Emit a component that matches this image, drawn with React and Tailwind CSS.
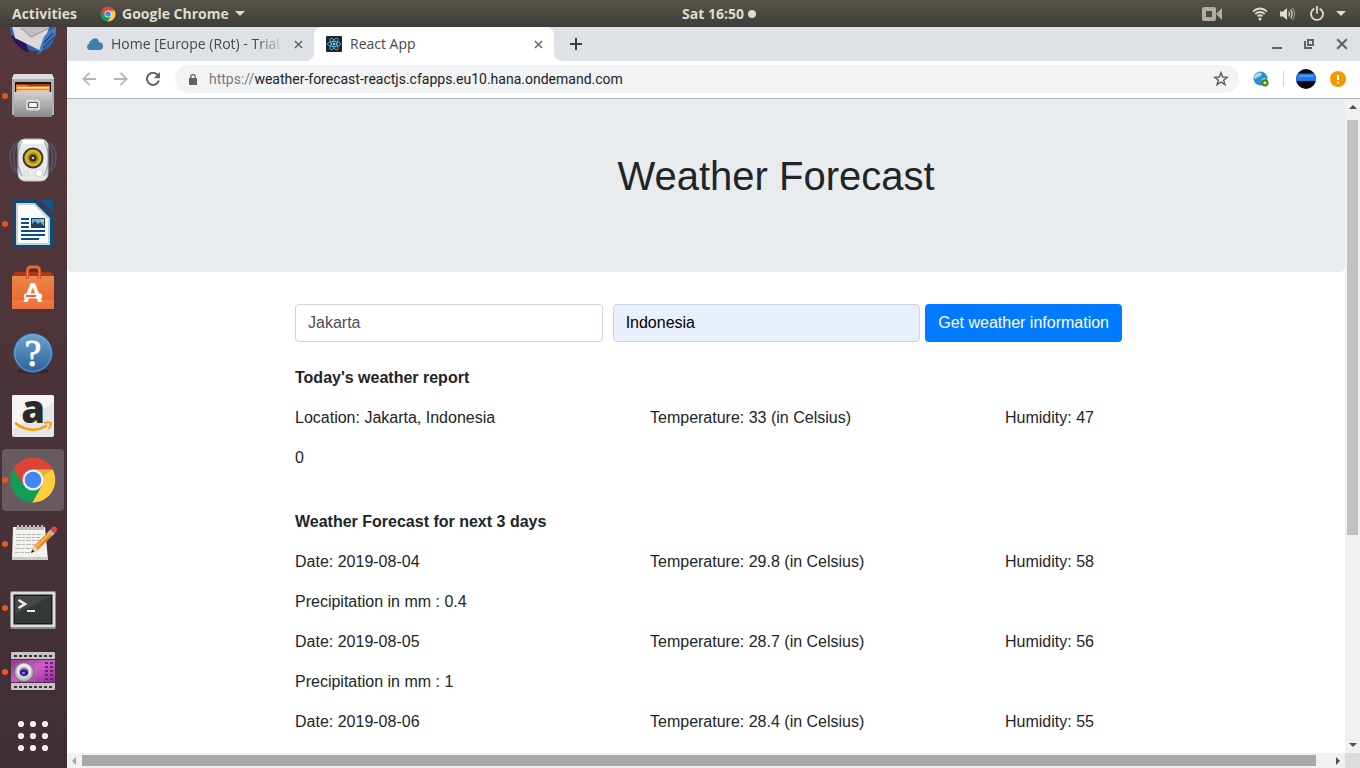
import React from "react";

const UI_FONT = "font-['Open_Sans','Noto_Sans',sans-serif]";

function ChromeLogo({ className }) {
  return (
    <svg viewBox="0 0 48 48" className={className} aria-hidden="true">
      <circle cx="24" cy="24" r="22.5" fill="#db4437" />
      <path d="M4.5 12.8 A22.5 22.5 0 0 0 23.4 46.5 L33.5 29.5 L14.5 29.5 Z" fill="#0f9d58" />
      <path d="M43.6 13.5 A22.5 22.5 0 0 1 23.4 46.5 L33.2 29.2 L24 13.5 Z" fill="#ffcd40" />
      <path d="M4.5 12.8 L14.8 29.2 L24 24 L24 13.5 Z" fill="#db4437" />
      <path d="M24 13.5 H43.6 L33 21 Z" fill="#000" opacity=".12" />
      <circle cx="24" cy="24" r="10.5" fill="#f1f1f1" />
      <circle cx="24" cy="24" r="8.3" fill="#4285f4" />
    </svg>
  );
}

function Thunderbird() {
  return (
    <svg viewBox="0 0 48 48" className="size-12" aria-hidden="true">
      <path d="M1 22 C1 6 12 1 24 1 C38 1 47 8 47 23 C46 34 41 40 36 43 L38 39 C34 44 30 47 27 47 L30 43 C18 44 4 36 1 22 Z" fill="#2f62a8" />
      <path d="M2 27 C5 35 11 41 20 45 L17 35 Z" fill="#2a1456" />
      <path d="M2 14 L42 14 L32 43 L6 30 Z" fill="#dcd8da" />
      <path d="M7 14 L22 29 L42 17 L42 12 Z" fill="#c3bcc0" />
      <path d="M12 20 L22 29 L40 20" fill="none" stroke="#8e858a" strokeWidth="1" />
      <path d="M47 18 C43 22 37 24 34 31 L30 43 C37 40 45 34 47 24 Z" fill="#3f7fc0" />
      <path d="M44 25 L35 35 M45 29 L34 40" stroke="#1c4382" strokeWidth="1.5" />
    </svg>
  );
}

function Files() {
  return (
    <svg viewBox="0 0 48 48" className="size-12" aria-hidden="true">
      <defs>
        <linearGradient id="cab" x1="0" y1="0" x2="0" y2="1">
          <stop offset="0" stopColor="#d0d0d0" />
          <stop offset="1" stopColor="#8a8a8a" />
        </linearGradient>
      </defs>
      <path d="M5 2 H43 L45 6 V43 H3 V6 Z" fill="#b0b0b0" />
      <path d="M5 2 H43 L45 7 H3 Z" fill="#dedede" />
      <rect x="6" y="10" width="36" height="12" fill="#1f1512" />
      <rect x="7" y="12" width="34" height="2" fill="#a83a10" />
      <path d="M7 13 H18 L20 14 H41 V21 H7 Z" fill="#ee7d2a" />
      <rect x="8" y="15" width="32" height="1.5" fill="#fff0dc" />
      <rect x="8" y="18" width="32" height="2" fill="#f6c17c" />
      <rect x="5" y="20" width="38" height="25" rx="1" fill="url(#cab)" />
      <rect x="17" y="27.5" width="14" height="11" rx="2.5" fill="#d9d9d9" />
      <rect x="19.5" y="30.500" width="9" height="5" rx="1" fill="#f3f3f3" stroke="#555" strokeWidth="1.200" />
    </svg>
  );
}

function Speaker() {
  return (
    <svg viewBox="0 0 48 48" className="size-12" aria-hidden="true">
      <rect x="9" y="3" width="30" height="42" rx="7" fill="#e9e9e7" stroke="#bcbcb8" strokeWidth="1" />
      <rect x="12" y="4" width="24" height="4" rx="2" fill="#fff" />
      <g fill="none" stroke="#5a78a8" strokeWidth="1.500" opacity=".5">
        <path d="M6 7 Q-4 22 6 36 M9 6 Q0 22 9 38 M13 5 Q4 22 13 40" />
        <path d="M42 7 Q52 22 42 36 M39 6 Q48 22 39 38 M35 5 Q44 22 35 40" />
      </g>
      <circle cx="24" cy="22" r="10.5" fill="#39393a" />
      <circle cx="24" cy="22" r="8.5" fill="#d9b916" />
      <circle cx="24" cy="22" r="5.5" fill="#a58a10" />
      <circle cx="24" cy="22" r="3.5" fill="#2c2c2c" />
      <circle cx="24" cy="22" r="1.3" fill="#ccc" />
      <circle cx="30" cy="37" r="3.8" fill="#fff" stroke="#cfcfcc" />
      <rect x="15" y="35" width="4" height="5" rx="1" fill="none" stroke="#d8d8d5" />
    </svg>
  );
}

function Writer() {
  return (
    <svg viewBox="0 0 48 48" className="size-12" aria-hidden="true">
      <path d="M6 0 H27 L44 16 V45 Q44 48 41 48 H7 Q4 48 4 45 V3 Q4 0 6 0 Z" fill="#0a4d7c" />
      <path d="M31 0 H42 Q44 0 44 2 V12 Z" fill="#0a5a90" />
      <path d="M7 3 H26 L41 18 V45 H7 Z" fill="#cfcfcf" />
      <path d="M9 5 H25 L39 19 V43 H9 Z" fill="#fafafa" />
      <g fill="#0b4f80">
        <rect x="12" y="18" width="8" height="2" />
        <rect x="12" y="22" width="8" height="2" />
        <rect x="12" y="26" width="8" height="2" />
        <rect x="12" y="30" width="24" height="2" />
        <rect x="12" y="34" width="24" height="2" />
        <rect x="12" y="38" width="18" height="2" />
      </g>
      <rect x="22.5" y="18.5" width="13" height="9" fill="#6fb4e0" stroke="#14405f" strokeWidth="1" />
      <path d="M23 27 V24 L26 21 L29 24 L31 22 L35 26 V27 Z" fill="#26404f" />
      <circle cx="33.5" cy="20.5" r="1.4" fill="#f2d04b" />
    </svg>
  );
}

function Software() {
  return (
    <svg viewBox="0 0 48 48" className="size-12 overflow-visible" aria-hidden="true">
      <defs>
        <linearGradient id="bag" x1="0" y1="0" x2="0" y2="1">
          <stop offset="0" stopColor="#e8884a" />
          <stop offset="1" stopColor="#ee5f24" />
        </linearGradient>
      </defs>
      <path d="M6 8 H42 L45 12 H3 Z" fill="#a8391a" />
      <rect x="3" y="12" width="42" height="33" fill="url(#bag)" />
      <rect x="3" y="36" width="42" height="9" fill="#fff" opacity=".1" />
      <path d="M18.500 15 V7 Q18.500 3 22 3 H27 Q30.500 3 30.500 7 V15" fill="none" stroke="#c94a1c" strokeWidth="3.400" />
      <path d="M18.500 15 V7 Q18.500 3 22 3 H27 Q30.500 3 30.500 7 V15" fill="none" stroke="#ef7a48" strokeWidth="1.500" />
      <text x="24" y="38" textAnchor="middle" fontSize="26" fontWeight="900" fontFamily="Lato, sans-serif" fill="#fff">A</text>
      <rect x="15" y="29.500" width="18" height="5" rx="1.500" fill="#fff" />
      <rect x="17" y="31" width="10" height="2" fill="#ee6a2c" />
    </svg>
  );
}

function Help() {
  return (
    <svg viewBox="0 0 48 48" className="size-12 overflow-visible" aria-hidden="true">
      <defs>
        <linearGradient id="help" x1="0" y1="0" x2="0" y2="1">
          <stop offset="0" stopColor="#6fa3cf" />
          <stop offset="1" stopColor="#2b6199" />
        </linearGradient>
      </defs>
      <ellipse cx="24" cy="43" rx="16" ry="3" fill="#000" opacity=".25" />
      <circle cx="24" cy="25" r="19.500" fill="url(#help)" stroke="#2a5c92" strokeWidth="1" />
      <circle cx="24" cy="25" r="18.300" fill="none" stroke="#8cb8dc" strokeWidth="1" opacity=".6" />
      <text x="24" y="38" textAnchor="middle" fontSize="37" fontFamily="Liberation Serif, serif" fill="#fff" stroke="#fff" strokeWidth=".9">?</text>
    </svg>
  );
}

function Amazon() {
  return (
    <svg viewBox="0 0 48 48" className="size-12 overflow-visible" aria-hidden="true">
      <rect x="3" y="3" width="42" height="42" rx="2" fill="#e6e6e6" />
      <path d="M3 5 Q3 3 5 3 H43 Q45 3 45 5 V10 L3 38 Z" fill="#f4f4f4" />
      <text x="24" y="31" textAnchor="middle" fontSize="38" fontWeight="800" fontFamily="Open Sans, sans-serif" fill="#2b2b2b">a</text>
      <path d="M6 31 Q22 43 38 33.500" fill="none" stroke="#f90" strokeWidth="2.600" />
      <path d="M35 31 Q40 29.500 42 31 Q42 34 39.500 37" fill="none" stroke="#f90" strokeWidth="1.800" />
    </svg>
  );
}

function Notes() {
  return (
    <svg viewBox="0 0 48 48" className="size-12" aria-hidden="true">
      <path d="M4 7 H36 L39 40 H3 Z" fill="#f2f2ee" />
      <path d="M3 37 H39 V40 H3 Z" fill="#c9cbbf" />
      <g stroke="#b9b9b9" strokeWidth="1" strokeDasharray="5 1 3 1">
        <path d="M7 14.500 H34 M7 17.500 H31 M7 20.500 H34 M7 24.500 H30 M6 28.500 H29 M6 32.500 H22" />
      </g>
      <g stroke="#5a5a5a" strokeWidth="2.600">
        <path d="M9 5 V10 M13 5 V10 M17 5 V10 M21 5 V10 M25 5 V10 M29 5 V10 M33 5 V10" />
      </g>
      <g stroke="#ddd" strokeWidth="1.400">
        <path d="M9 5 V10 M13 5 V10 M17 5 V10 M21 5 V10 M25 5 V10 M29 5 V10 M33 5 V10" />
      </g>
      <path d="M22 33 L25 26 L41 10 L45 14 L29 30 Z" fill="#f08a24" />
      <path d="M26.500 27.500 L42 12" stroke="#ffc06a" strokeWidth="1.500" />
      <path d="M22 33 L25 26 L29 30 Z" fill="#f2d3a5" />
      <path d="M22 33 L23.200 29.500 L25.500 31.500 Z" fill="#222" />
      <path d="M39 12 L42 9 L46 13 L43 16 Z" fill="#b8b8c0" />
      <circle cx="45" cy="9.500" r="3" fill="#e8414d" />
    </svg>
  );
}

function Terminal() {
  return (
    <svg viewBox="0 -1 48 48" className="size-12" aria-hidden="true">
      <rect x="1" y="6" width="46" height="38" rx="2" fill="#8c8c8a" />
      <rect x="2" y="7" width="44" height="35" rx="1" fill="#dededc" />
      <rect x="4.500" y="9.500" width="39" height="30" fill="#181a1a" />
      <rect x="6" y="11" width="36" height="27" fill="#343838" />
      <path d="M6 11 H42 L6 29 Z" fill="#444848" />
      <path d="M9.500 15 L16 19 L9.500 23" fill="none" stroke="#ededed" strokeWidth="2.600" />
      <path d="M18 26 H26" stroke="#ededed" strokeWidth="2" />
    </svg>
  );
}

function Recorder() {
  return (
    <svg viewBox="0 0 48 48" className="size-12" aria-hidden="true">
      <defs>
        <linearGradient id="rec" x1="0" y1="0" x2="1" y2="1">
          <stop offset="0" stopColor="#8f3790" />
          <stop offset=".5" stopColor="#cc5fc6" />
          <stop offset="1" stopColor="#8a2c91" />
        </linearGradient>
      </defs>
      <rect x="2" y="4" width="44" height="38" rx="1" fill="#c4c4c4" />
      <rect x="2" y="11" width="44" height="24" fill="url(#rec)" />
      <path d="M2 11.500 H46 M2 34.500 H46" stroke="#5c2362" strokeWidth="1" />
      <path d="M5 8 H44 M5 39 H44" stroke="#3b3434" strokeWidth="2.200" strokeDasharray="3 2" />
      <g stroke="#6a2374" strokeWidth="3" strokeDasharray="2 2">
        <path d="M37.500 14 V33 M42.500 14 V33" />
      </g>
      <circle cx="15" cy="24" r="9.500" fill="#bdbdbd" stroke="#6e6e6e" strokeWidth="1" />
      <circle cx="15" cy="23" r="7" fill="#efefef" />
      <circle cx="15" cy="24" r="5" fill="#9a9a9f" />
      <ellipse cx="15" cy="24.500" rx="4" ry="3.200" fill="#3a14a8" />
      <rect x="13" y="24" width="3" height="2" fill="#8e6df0" />
    </svg>
  );
}

function AppsGrid() {
  const at = [12, 24, 36];
  return (
    <svg viewBox="0 0 48 48" className="size-12" aria-hidden="true">
      {at.map((y) => at.map((x) => <circle key={`${x}-${y}`} cx={x} cy={y} r="3.100" fill="#f2f0ef" />))}
    </svg>
  );
}

const dockItems = [
  { name: "Thunderbird", icon: <Thunderbird /> },
  { name: "Files", icon: <Files />, running: true },
  { name: "Rhythmbox", icon: <Speaker /> },
  { name: "LibreOffice Writer", icon: <Writer />, running: true },
  { name: "Ubuntu Software", icon: <Software /> },
  { name: "Help", icon: <Help /> },
  { name: "Amazon", icon: <Amazon /> },
  { name: "Google Chrome", icon: <ChromeLogo className="size-12" />, running: true, active: true },
  { name: "Text Editor", icon: <Notes />, running: true },
  { name: "Terminal", icon: <Terminal />, running: true },
  { name: "Screen Recorder", icon: <Recorder />, running: true },
  { name: "Show Applications", icon: <AppsGrid /> },
];

function Dock() {
  return (
    <nav aria-label="Dock" className="flex w-[67px] shrink-0 flex-col justify-end overflow-hidden bg-linear-to-b from-[#55383b] to-[#3f2e35]">
      {dockItems.map((item) => (
        <div key={item.name} className="relative flex h-16 shrink-0 items-center pl-0.5">
          <button
            aria-label={item.name}
            className={`flex size-[62px] items-center justify-center rounded-sm ${item.active ? "bg-[#695a5f]" : ""}`}
          >
            {item.icon}
          </button>
          {item.running && <span className="absolute left-0.5 top-[29px] size-1.5 rounded-full bg-[#e95420]" />}
        </div>
      ))}
    </nav>
  );
}

function TopBar() {
  return (
    <header className={`grid h-[27px] shrink-0 grid-cols-[1fr_auto_1fr] items-center bg-linear-to-b from-[#57534a] to-[#3e3d38] pl-3 pr-3.5 text-sm font-bold text-[#dfdbd2] ${UI_FONT}`}>
      <div className="flex items-center">
        <button className="w-[88px] text-left">Activities</button>
        <button className="flex items-center gap-1.5">
          <ChromeLogo className="size-4" />
          <span>Google Chrome</span>
          <svg viewBox="0 0 10 5" className="h-[5px] w-2.5" aria-hidden="true"><path d="M0 0 H10 L5 5 Z" fill="#dfdbd2" /></svg>
        </button>
      </div>
      <button className="ml-20 flex items-center gap-1">
        Sat 16:50 <span className="size-2 rounded-full bg-[#dfdbd2]" />
      </button>
      <div className="flex items-center justify-end">
        <svg viewBox="0 0 20 14" className="mr-[30px] h-3.5 w-5" aria-hidden="true">
          <path fillRule="evenodd" d="M2 0 H12 Q14 0 14 2 V12 Q14 14 12 14 H2 Q0 14 0 12 V2 Q0 0 2 0 Z M4 4 V10 H10 V4 Z" fill="#b1ada6" />
          <path d="M14 7 L20 1 V13 Z" fill="#b1ada6" />
        </svg>
        <svg viewBox="0 0 16 14" className="mr-3 h-3.5 w-4" fill="none" stroke="#dfdbd2" strokeWidth="1.700" aria-hidden="true">
          <path d="M1 4.500 Q8 -1.500 15 4.500" />
          <path d="M3.300 7 Q8 3 12.700 7" />
          <path d="M5.500 9.300 Q8 7.200 10.500 9.300" />
          <circle cx="8" cy="12" r="1.500" fill="#dfdbd2" stroke="none" />
        </svg>
        <svg viewBox="0 0 16 14" className="mr-3.5 h-3.5 w-4" fill="none" strokeWidth="1.300" aria-hidden="true">
          <path d="M0 4.500 H3 L7 1 V13 L3 9.500 H0 Z" fill="#dfdbd2" />
          <path d="M8.700 4.500 Q10.300 7 8.700 9.500" stroke="#dfdbd2" />
          <path d="M10.700 2.500 Q13.300 7 10.700 11.500" stroke="#dfdbd2" />
          <path d="M12.700 .8 Q16.300 7 12.700 13.200" stroke="#8e8b84" />
        </svg>
        <svg viewBox="0 0 14 15" className="mr-3 h-[15px] w-3.5" fill="none" stroke="#dfdbd2" strokeWidth="1.800" aria-hidden="true">
          <path d="M4.300 2.600 A6 6 0 1 0 9.700 2.600" />
          <path d="M7 0 V7.500" />
        </svg>
        <svg viewBox="0 0 10 5" className="h-[5px] w-2.5" aria-hidden="true"><path d="M0 0 H10 L5 5 Z" fill="#dfdbd2" /></svg>
      </div>
    </header>
  );
}

function Cross({ className, width = 1.6 }) {
  return (
    <svg viewBox="0 0 10 10" className={className} stroke="currentColor" strokeWidth={width} fill="none" aria-hidden="true">
      <path d="M1 1 L9 9 M9 1 L1 9" />
    </svg>
  );
}

function TabStrip() {
  return (
    <div className={`flex h-[34px] shrink-0 items-stretch bg-white text-sm text-[#45494d] ${UI_FONT}`}>
      <div className="flex w-[247px] items-center rounded-br-lg bg-[#dee1e6] pl-5 pr-[9px]">
        <svg viewBox="0 0 16 12" className="mr-2 h-3 w-4 shrink-0" aria-hidden="true">
          <path d="M3.500 12 Q0 12 0 8.700 Q0 6.200 2.300 5.500 Q2 3 4 2.800 Q5.200 .3 8 .3 Q11.500 .5 12 4.300 Q16 4.500 16 8.300 Q16 12 12.500 12 Z" fill="#427cac" />
        </svg>
        <span className="min-w-0 flex-1 overflow-hidden whitespace-nowrap [mask-image:linear-gradient(to_right,black_84%,transparent)]">
          Home [Europe (Rot) - Trial
        </span>
        <button aria-label="Close tab" className="ml-2 p-0.5 text-[#5f6368]"><Cross className="size-[9px]" /></button>
      </div>
      <div className="bg-[#dee1e6]">
        <div className="flex h-full w-60 items-center rounded-t-lg bg-white pl-3 pr-[9px]">
          <svg viewBox="0 0 16 16" className="mr-2 size-4" aria-hidden="true">
            <rect width="16" height="16" rx="1" fill="#20232a" />
            <g fill="none" stroke="#61dafb" strokeWidth=".7">
              <ellipse cx="8" cy="8" rx="6.600" ry="2.500" />
              <ellipse cx="8" cy="8" rx="6.600" ry="2.500" transform="rotate(60 8 8)" />
              <ellipse cx="8" cy="8" rx="6.600" ry="2.500" transform="rotate(120 8 8)" />
            </g>
            <circle cx="8" cy="8" r="1.300" fill="#61dafb" />
          </svg>
          <span className="flex-1">React App</span>
          <button aria-label="Close tab" className="p-0.5 text-[#5f6368]"><Cross className="size-[9px]" /></button>
        </div>
      </div>
      <div className="flex flex-1 items-center rounded-bl-lg bg-[#dee1e6] pl-4 pr-3 text-[#3c4043]">
        <button aria-label="New tab">
          <svg viewBox="0 0 12 12" className="size-3" stroke="currentColor" strokeWidth="2" aria-hidden="true"><path d="M6 0 V12 M0 6 H12" /></svg>
        </button>
        <div className="ml-auto flex items-center gap-[22px] text-[#5f6368]">
          <button aria-label="Minimize">
            <svg viewBox="0 0 10 10" className="size-2.5" aria-hidden="true"><path d="M0 8 H10 V10 H0 Z" fill="currentColor" /></svg>
          </button>
          <button aria-label="Restore">
            <svg viewBox="0 0 10 10" className="size-2.5" fill="none" stroke="currentColor" strokeWidth="2" aria-hidden="true">
              <path d="M4 1 H9 V6 H4 Z M1 2 V9 H8" />
            </svg>
          </button>
          <button aria-label="Close window"><Cross className="size-3" width={1.8} /></button>
        </div>
      </div>
    </div>
  );
}

function Toolbar() {
  return (
    <div className={`flex h-[38px] shrink-0 items-center border-b border-[#b6b4b6] bg-white pb-px pl-[15px] pr-3.5 text-sm ${UI_FONT}`}>
      <button aria-label="Back" className="mr-[18px]">
        <svg viewBox="0 0 14 14" className="size-3.5" fill="none" stroke="#b5b7ba" strokeWidth="1.800" aria-hidden="true"><path d="M14 7 H1.500 M7.500 .8 L1.300 7 L7.500 13.200" /></svg>
      </button>
      <button aria-label="Forward" className="mr-[18px]">
        <svg viewBox="0 0 14 14" className="size-3.5" fill="none" stroke="#b5b7ba" strokeWidth="1.800" aria-hidden="true"><path d="M0 7 H12.500 M6.500 .8 L12.700 7 L6.500 13.200" /></svg>
      </button>
      <button aria-label="Reload" className="mr-[15px]">
        <svg viewBox="0 0 14 14" className="size-3.5" aria-hidden="true">
          <path d="M12 3.500 A6 6 0 1 0 12.800 8.500" fill="none" stroke="#5f6368" strokeWidth="2" />
          <path d="M14 0 V6.200 H7.800 Z" fill="#5f6368" />
        </svg>
      </button>
      <div className="flex h-7 flex-1 items-center rounded-full bg-[#f1f3f4] pl-3.5 pr-2.5">
        <svg viewBox="0 0 8 11" className="mr-3 h-[11px] w-2" aria-hidden="true">
          <path d="M0 4 H8 V11 H0 Z" fill="#5f6368" />
          <path d="M1.800 4.500 V2.800 Q1.800 .7 4 .7 Q6.200 .7 6.200 2.800 V4.500" fill="none" stroke="#5f6368" strokeWidth="1.300" />
        </svg>
        <a href="https://weather-forecast-reactjs.cfapps.eu10.hana.ondemand.com" className="flex-1 whitespace-nowrap font-[Roboto,sans-serif] text-[#202124]">
          <span className="text-[#777b80]">https://</span>weather-forecast-reactjs.cfapps.eu10.hana.ondemand.com
        </a>
        <button aria-label="Bookmark this page">
          <svg viewBox="0 0 16 16" className="size-4" fill="none" stroke="#5f6368" strokeWidth="1.500" aria-hidden="true">
            <path d="M8 1.800 L9.700 6 L14.200 6.300 L10.700 9.200 L11.900 13.600 L8 11.200 L4.100 13.600 L5.300 9.200 L1.800 6.300 L6.300 6 Z" />
          </svg>
        </button>
      </div>
      <button aria-label="Extension" className="ml-3.5">
        <svg viewBox="0 0 16 16" className="size-4" aria-hidden="true">
          <circle cx="7.500" cy="7.500" r="7" fill="#2f8fd0" />
          <path d="M3 3 Q7 0 9 3 Q8 6 5 6 Q3 9 1 7 Q1 4 3 3 Z M9 8 Q12 6 13 8 L10 12 Q8 10 9 8 Z" fill="#a5d8f3" />
          <circle cx="12" cy="11.800" r="2.600" fill="#d8efb0" stroke="#3f8418" strokeWidth="2" />
        </svg>
      </button>
      <span className="ml-3.5 mr-3 h-4 w-px bg-[#cfd1d4]" />
      <button aria-label="Profile" className="mr-3.5">
        <svg viewBox="0 0 20 20" className="size-5" aria-hidden="true">
          <circle cx="10" cy="10" r="10" fill="#06090f" />
          <path d="M1.500 4.500 H18.500 L20 9 L19.800 12 H.2 L0 9 Z" fill="#1b7ae8" />
          <path d="M3 6 H17 V8 H3 Z" fill="#4c9cf2" />
        </svg>
      </button>
      <button aria-label="Update available">
        <svg viewBox="0 0 16 16" className="size-4" aria-hidden="true">
          <circle cx="8" cy="8" r="8" fill="#f29900" />
          <path d="M7 4 H9 V9 H7 Z M7 10.500 H9 V12.500 H7 Z" fill="#fff" />
        </svg>
      </button>
    </div>
  );
}

const forecast = [
  { date: "2019-08-04", temperature: "29.8", humidity: "58", precipitation: "0.4" },
  { date: "2019-08-05", temperature: "28.7", humidity: "56", precipitation: "1" },
  { date: "2019-08-06", temperature: "28.4", humidity: "55" },
];

function Row({ first, temperature, humidity }) {
  return (
    <div className="grid grid-cols-3">
      <p>{first}</p>
      <p>Temperature: {temperature} (in Celsius)</p>
      <p>Humidity: {humidity}</p>
    </div>
  );
}

function WeatherPage() {
  const field = "h-[38px] min-w-0 flex-1 rounded border border-[#ced4da] px-3 outline-none";
  return (
    <main className="min-w-0 flex-1 overflow-hidden bg-white font-['Liberation_Sans',Arial,sans-serif] text-base text-[#212529]">
      <div className="rounded-b-[5px] bg-[#e9ecef] pb-[72px] pl-[140px] pt-[53px]">
        <h1 className="text-center text-[40px] leading-[48px]">Weather Forecast</h1>
      </div>
      <div className="-mr-[15px] pl-[228px] pt-8">
        <form className="flex max-w-[827px]" onSubmit={(e) => e.preventDefault()}>
          <input aria-label="City" defaultValue="Jakarta" className={`${field} mr-2.5 bg-white text-[#495057]`} />
          <input aria-label="Country" defaultValue="Indonesia" className={`${field} mr-[5px] bg-[#e8f0fe] text-black`} />
          <button className="h-[38px] shrink-0 rounded bg-[#007bff] px-[13px] text-white">Get weather information</button>
        </form>
        <section className="mt-6 flex flex-col gap-4">
          <h2 className="font-bold">Today's weather report</h2>
          <Row first="Location: Jakarta, Indonesia" temperature="33" humidity="47" />
          <p>0</p>
        </section>
        <section className="mt-10 flex flex-col gap-4">
          <h2 className="font-bold">Weather Forecast for next 3 days</h2>
          {forecast.map((day) => (
            <React.Fragment key={day.date}>
              <Row first={`Date: ${day.date}`} temperature={day.temperature} humidity={day.humidity} />
              {day.precipitation && <p>Precipitation in mm : {day.precipitation}</p>}
            </React.Fragment>
          ))}
        </section>
      </div>
    </main>
  );
}

function Arrow({ d, fill = "#505050" }) {
  return <svg viewBox="0 0 8 8" className="size-2" aria-hidden="true"><path d={d} fill={fill} /></svg>;
}

function VerticalScrollbar() {
  return (
    <div className="flex w-[15px] shrink-0 flex-col items-center bg-[#f1f1f1]">
      <div className="flex h-[21px] shrink-0 items-center pb-1.5"><Arrow d="M0 6 H8 L4 2 Z" /></div>
      <div className="w-[11px] flex-[415] bg-[#c1c1c1]" />
      <div className="flex-[203]" />
      <div className="flex h-[15px] shrink-0 items-center"><Arrow d="M0 1 H8 L4 5 Z" /></div>
    </div>
  );
}

function HorizontalScrollbar() {
  return (
    <div className="flex h-[15px] shrink-0 items-center bg-[#f1f1f1]">
      <div className="flex w-[15px] shrink-0 justify-center"><Arrow d="M5 0 V8 L1 4 Z" fill="#a3a3a3" /></div>
      <div className="h-[11px] flex-[1234] bg-[#a8a8a8]" />
      <div className="flex-[14]" />
      <div className="flex w-[15px] shrink-0 justify-center"><Arrow d="M2 0 V8 L6 4 Z" /></div>
      <div className="size-[15px] shrink-0 bg-[#dcdcdc]" />
    </div>
  );
}

export default function App() {
  return (
    <div className="flex h-screen flex-col overflow-hidden">
      <TopBar />
      <div className="flex min-h-0 flex-1">
        <Dock />
        <div className="flex min-w-0 flex-1 flex-col">
          <TabStrip />
          <Toolbar />
          <div className="flex min-h-0 flex-1">
            <WeatherPage />
            <VerticalScrollbar />
          </div>
          <HorizontalScrollbar />
        </div>
      </div>
    </div>
  );
}
